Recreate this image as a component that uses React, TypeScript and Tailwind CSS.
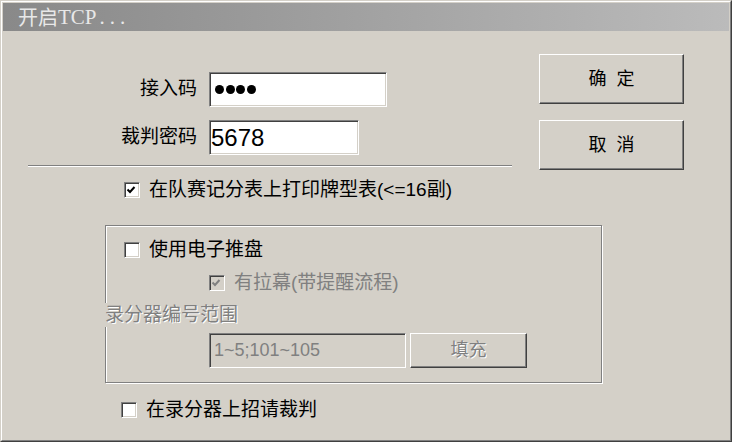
import React from "react";

const font = "font-['Liberation_Sans','Noto_Sans_CJK_SC',sans-serif]";
const sunken =
  "border-t border-l border-r border-b border-t-[#808080] border-l-[#808080] border-r-white border-b-white shadow-[inset_1px_1px_0_#404040,inset_-1px_-1px_0_#d4d0c8]";
const raised =
  "border-t border-l border-r border-b border-t-white border-l-white border-r-[#404040] border-b-[#404040] shadow-[inset_-1px_-1px_0_#808080]";

function Check({ checked, disabled }: { checked?: boolean; disabled?: boolean }) {
  return (
    <div className={`w-[16px] h-[16px] shrink-0 ${sunken} ${disabled ? "bg-[#d4d0c8]" : "bg-white"}`}>
      {checked && (
        <svg width="14" height="14" viewBox="0 0 14 14">
          <polyline
            points="2.5,6.5 5,9 9.5,4"
            fill="none"
            stroke={disabled ? "#808080" : "#000"}
            strokeWidth="2"
          />
        </svg>
      )}
    </div>
  );
}

function CheckRow({
  label,
  checked,
  disabled,
  className,
}: {
  label: string;
  checked?: boolean;
  disabled?: boolean;
  className?: string;
}) {
  return (
    <div className={`flex items-center h-[16px] gap-[9px] ${className ?? ""}`}>
      <Check checked={checked} disabled={disabled} />
      <span className={`text-[19px] leading-[24px] whitespace-nowrap ${disabled ? "text-[#808080]" : "text-black"}`}>
        {label}
      </span>
    </div>
  );
}

function Button({ children, className }: { children: React.ReactNode; className?: string }) {
  return (
    <div className={`flex items-center justify-center bg-[#d4d0c8] ${raised} ${className ?? ""}`}>
      {children}
    </div>
  );
}

export default function App() {
  return (
    <div className={`w-[732px] h-[442px] bg-[#d4d0c8] border border-t-[#d4d0c8] border-l-[#d4d0c8] border-r-[#404040] border-b-[#404040] ${font}`}>
      <div className="h-full flex flex-col border border-t-white border-l-white border-r-[#808080] border-b-[#808080] p-[1px]">
        {/* title */}
        <div className="h-[28px] shrink-0 flex items-center pl-[15px] bg-linear-to-r from-[#898989] to-[#bbbbbb] text-[#e8e8e8]">
          <span className="text-[20px] leading-none font-['Noto_Sans_CJK_SC',sans-serif]">开启</span>
          <span className="text-[21px] leading-none font-['Liberation_Serif',serif]">TCP</span>
          <span className="text-[21px] leading-none font-['Liberation_Serif',serif] tracking-[5px] ml-[3px]">...</span>
        </div>

        {/* body */}
        <div className="flex flex-col">
          <div className="flex items-start">
            <div className="w-[509px] pl-[25px] pt-[41px] flex flex-col">
              <div className="flex items-center">
                <div className="w-[169px] text-right text-[19px] text-black">接入码</div>
                <div className={`ml-[12px] w-[178px] h-[35px] bg-white flex items-center pl-[5px] gap-[1.5px] ${sunken}`}>
                  <div className="w-[9px] h-[9px] rounded-full bg-black" />
                  <div className="w-[9px] h-[9px] rounded-full bg-black" />
                  <div className="w-[9px] h-[9px] rounded-full bg-black" />
                  <div className="w-[9px] h-[9px] rounded-full bg-black" />
                </div>
              </div>
              <div className="flex items-center mt-[13px]">
                <div className="w-[169px] text-right text-[19px] text-black">裁判密码</div>
                <div className={`ml-[12px] w-[150px] h-[35px] bg-white flex items-center pl-[1px] text-[24px] text-black ${sunken}`}>
                  5678
                </div>
              </div>
              <div className="mt-[10px] h-[2px] border-t border-b border-t-[#808080] border-b-white" />
            </div>
            <div className="ml-[27px] pt-[23px] flex flex-col gap-[16px]">
              <Button className="w-[145px] h-[50px]">
                <span className="text-[18px] text-black [word-spacing:5px]">确 定</span>
              </Button>
              <Button className="w-[145px] h-[50px]">
                <span className="text-[18px] text-black [word-spacing:5px]">取 消</span>
              </Button>
            </div>
          </div>

          <CheckRow className="mt-[12px] ml-[121px]" checked label="在队赛记分表上打印牌型表(<=16副)" />

          <div className="mt-[27px] ml-[102px] w-[497px] h-[158px] border border-[#808080] shadow-[inset_1px_1px_0_#fff,1px_1px_0_#fff] flex flex-col">
            <CheckRow className="mt-[16px] ml-[18px]" label="使用电子推盘" />
            <CheckRow className="mt-[17px] ml-[103px]" checked disabled label="有拉幕(带提醒流程)" />
            <div className="mt-[12px] -ml-[1px] w-fit bg-[#d4d0c8] text-[19px] leading-[24px] text-[#808080] [text-shadow:1px_1px_0_#fff]">
              录分器编号范围
            </div>
            <div className="mt-[6px] ml-[103px] flex">
              <div className={`w-[197px] h-[35px] bg-[#d4d0c8] flex items-center pl-[4px] text-[18px] text-[#808080] ${sunken}`}>
                1~5;101~105
              </div>
              <Button className="ml-[4px] w-[117px] h-[35px]">
                <span className="text-[18px] text-[#808080] [text-shadow:1px_1px_0_#fff]">填充</span>
              </Button>
            </div>
          </div>

          <CheckRow className="mt-[19px] ml-[118px]" label="在录分器上招请裁判" />
        </div>
      </div>
    </div>
  );
}
